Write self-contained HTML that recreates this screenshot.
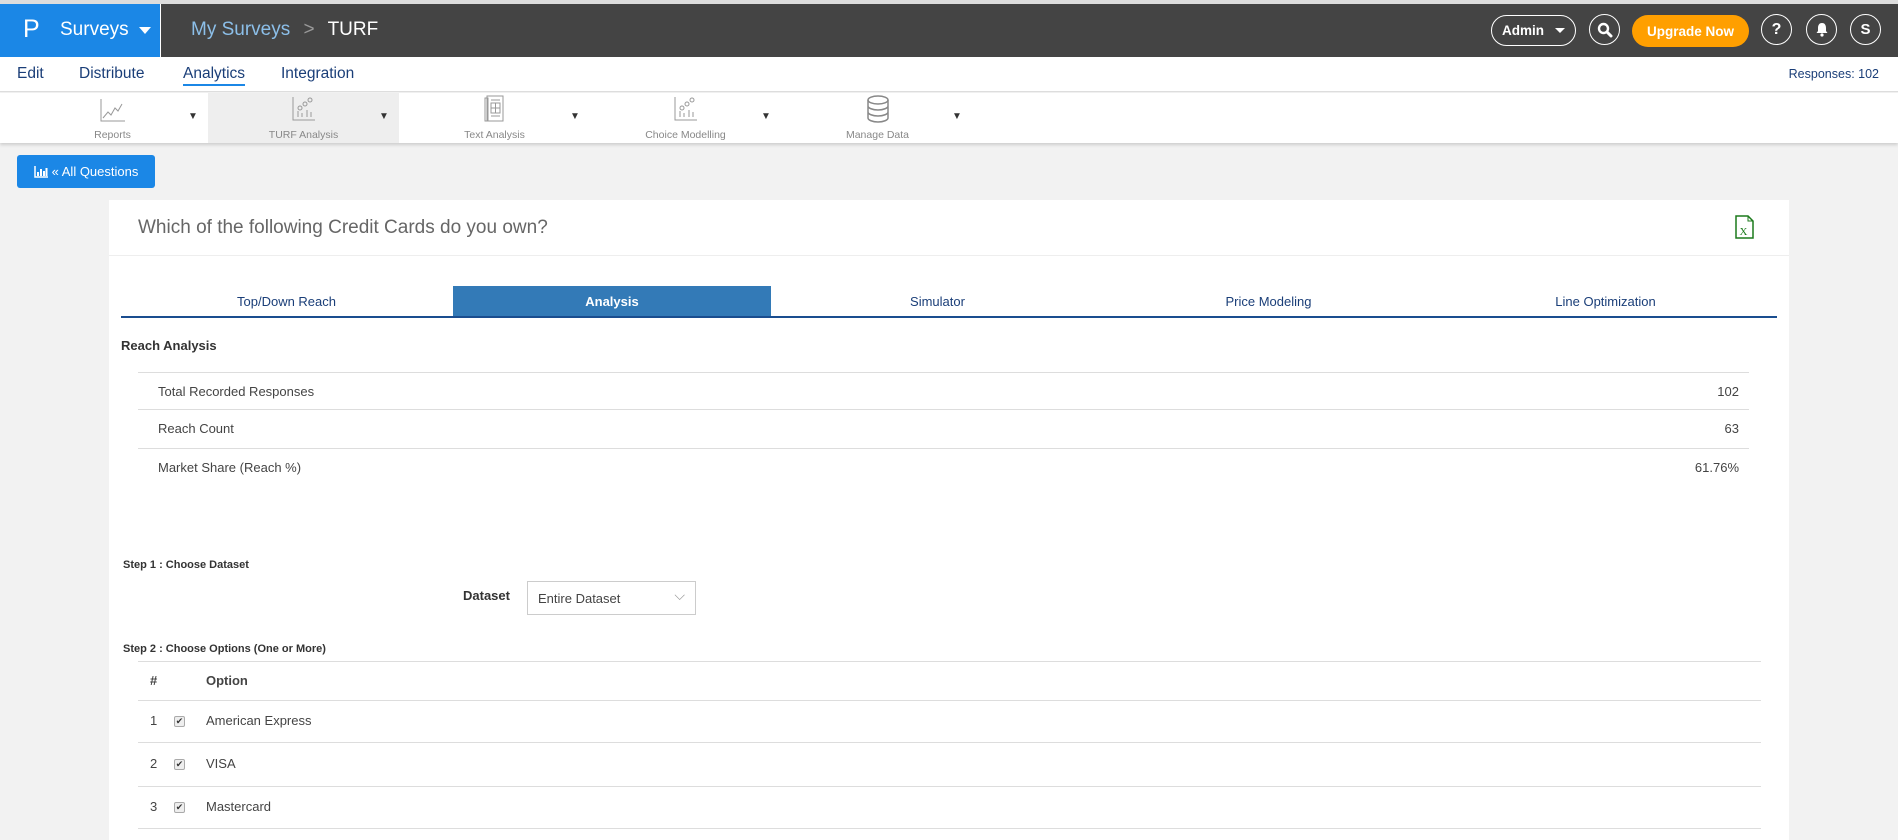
<!DOCTYPE html>
<html><head><meta charset="utf-8"><style>
*{box-sizing:border-box;margin:0;padding:0}
body{width:1898px;height:830px;overflow:hidden;background:#f2f2f2;font-family:"Liberation Sans",sans-serif;position:relative;color:#333}
.abs{position:absolute}
#strip{left:0;top:0;width:1898px;height:4px;background:#ddd}
#top{left:0;top:4px;width:1898px;height:53px;background:#444}
#logo{left:0;top:4px;width:161px;height:53px;background:#1b87e6;border-right:1px solid #fff}
.pill{border:1.5px solid #fff;border-radius:16px;color:#fff;font-size:13.5px;font-weight:bold;display:flex;align-items:center;justify-content:center}
.circ{width:31px;height:31px;border:1.5px solid #fff;border-radius:50%;color:#fff;font-weight:bold;font-size:16px;display:flex;align-items:center;justify-content:center;top:14px}
#nav{left:0;top:57px;width:1898px;height:35px;background:#fff;border-bottom:1px solid #ddd}
.nv{top:8px;font-size:15.5px;color:#1a3e78}
#tb{left:0;top:93px;width:1898px;height:50px;background:#fff;box-shadow:0 2px 3px rgba(0,0,0,.15)}
.tbl{font-size:10.5px;color:#888;top:36px;text-align:center;width:191px}
.arr{top:18px;font-size:10px;color:#333}
#btn{left:17px;top:155px;width:138px;height:33px;background:#1b87e6;border-radius:3px;color:#fff;font-size:13px;display:flex;align-items:center;justify-content:center}
#card{left:109px;top:200px;width:1680px;height:640px;background:#fff}
.tab{top:86px;height:30px;font-size:13px;color:#1a3e78;display:flex;align-items:center;justify-content:center}
.row{position:absolute;left:29px;width:1611px;border-top:1px solid #ddd;height:38px;font-size:13px;color:#444}
.row span{position:absolute;top:11px}
.orow{position:absolute;left:29px;width:1623px;border-top:1px solid #ddd;font-size:13px;color:#444}
.orow span{position:absolute}
.cb{width:11px;height:11px;border:1px solid #aaa;border-radius:2px;background:#eee;font-size:9px;line-height:9px;text-align:center;color:#333}
</style></head><body>
<div id="strip" class="abs"></div>
<div id="top" class="abs"></div>
<div id="logo" class="abs">
 <div class="abs" style="left:23px;top:11px;color:#fff;font-size:25px">P</div>
 <div class="abs" style="left:60px;top:15px;color:#fff;font-size:19px">Surveys</div>
 <div class="abs" style="left:139px;top:23px;width:0;height:0;border-left:6px solid transparent;border-right:6px solid transparent;border-top:7px solid #fff"></div>
</div>
<div class="abs" style="left:191px;top:19px;font-size:19px;color:#8cbfe9">My Surveys <span style="color:#999;margin:0 8px">&gt;</span> <span style="color:#fff">TURF</span></div>
<div class="abs pill" style="left:1491px;top:15px;width:85px;height:31px;justify-content:flex-start;padding-left:10px">Admin<span style="position:absolute;right:10px;top:12px;border-left:5px solid transparent;border-right:5px solid transparent;border-top:5px solid #fff"></span></div>
<div class="abs circ" style="left:1589px"><svg width="16" height="16" viewBox="0 0 16 16"><circle cx="6.5" cy="6.5" r="4.5" stroke="#fff" stroke-width="2.4" fill="none"/><path d="M10 10l4 4" stroke="#fff" stroke-width="3" stroke-linecap="round"/></svg></div>
<div class="abs" style="left:1632px;top:15px;width:117px;height:32px;background:#ff9f00;border-radius:16px;color:#fff;font-size:13.5px;font-weight:bold;display:flex;align-items:center;justify-content:center">Upgrade Now</div>
<div class="abs circ" style="left:1761px">?</div>
<div class="abs circ" style="left:1806px"><svg width="14" height="15" viewBox="0 0 14 15"><path d="M7 1C4 1 3 3.5 3 6v3L1.5 11h11L11 9V6c0-2.5-1-5-4-5z" fill="#fff"/><circle cx="7" cy="13" r="1.6" fill="#fff"/></svg></div>
<div class="abs circ" style="left:1850px;font-size:15px">S</div>
<div id="nav" class="abs">
 <div class="abs nv" style="left:17px">Edit</div>
 <div class="abs nv" style="left:79px">Distribute</div>
 <div class="abs nv" style="left:183px;border-bottom:2px solid #1b87e6;padding-bottom:1px">Analytics</div>
 <div class="abs nv" style="left:281px">Integration</div>
 <div class="abs" style="right:19px;top:10px;font-size:12.5px;color:#1a3e78">Responses: 102</div>
</div>
<div id="tb" class="abs">
 <div class="abs" style="left:208px;top:0;width:191px;height:50px;background:#eee"></div>
 <div class="abs tbl" style="left:17px">Reports</div>
 <div class="abs tbl" style="left:208px">TURF Analysis</div>
 <div class="abs tbl" style="left:399px">Text Analysis</div>
 <div class="abs tbl" style="left:590px">Choice Modelling</div>
 <div class="abs tbl" style="left:782px">Manage Data</div>
 <div class="abs arr" style="left:188px">▼</div><div class="abs arr" style="left:379px">▼</div><div class="abs arr" style="left:570px">▼</div><div class="abs arr" style="left:761px">▼</div><div class="abs arr" style="left:952px">▼</div>
 <svg class="abs" style="left:100px;top:5px" width="26" height="25" viewBox="0 0 26 25"><path d="M1 1v22h24" stroke="#999" fill="none"/><path d="M3 20l5-6 3 3 4-7 3 3 4-7" stroke="#999" fill="none"/></svg>
 <svg class="abs" style="left:292px;top:3px" width="24" height="26" viewBox="0 0 24 26"><path d="M1 1v23h22" stroke="#999" fill="none"/><path d="M6 21v-6M10 21v-4M15 21v-7M19 21v-5" stroke="#999"/><circle cx="8" cy="12" r="2" stroke="#999" fill="none"/><circle cx="13" cy="8" r="2" stroke="#999" fill="none"/><circle cx="18" cy="4" r="2" stroke="#999" fill="none"/></svg>
 <svg class="abs" style="left:484px;top:2px" width="22" height="28" viewBox="0 0 22 28"><rect x="3" y="1" width="16" height="25" stroke="#999" fill="none"/><rect x="1" y="3" width="3" height="23" stroke="#999" fill="none"/><rect x="7" y="8" width="9" height="10" stroke="#999" fill="none"/><path d="M7 13h9M11.5 8v10M7 21h9M7 5h9" stroke="#999"/></svg>
 <svg class="abs" style="left:674px;top:3px" width="24" height="26" viewBox="0 0 24 26"><path d="M1 1v23h22" stroke="#999" fill="none"/><path d="M6 21v-6M10 21v-4M15 21v-7M19 21v-5" stroke="#999"/><circle cx="8" cy="12" r="2" stroke="#999" fill="none"/><circle cx="13" cy="8" r="2" stroke="#999" fill="none"/><circle cx="18" cy="4" r="2" stroke="#999" fill="none"/></svg>
 <svg class="abs" style="left:866px;top:2px" width="24" height="28" viewBox="0 0 24 28"><ellipse cx="12" cy="5" rx="10" ry="4" stroke="#888" stroke-width="1.5" fill="none"/><path d="M2 5v18c0 2 4.5 4 10 4s10-2 10-4V5M2 11c0 2 4.5 4 10 4s10-2 10-4M2 17c0 2 4.5 4 10 4s10-2 10-4" stroke="#888" stroke-width="1.5" fill="none"/></svg>
</div>
<div id="btn" class="abs"><svg width="14" height="12" viewBox="0 0 14 12" style="margin-right:4px"><path d="M1 0v11h13" stroke="#fff" stroke-width="1.5" fill="none"/><path d="M4 10V6M7 10V3M10 10V5M12.5 10V2" stroke="#fff" stroke-width="2"/></svg>« All Questions</div>
<div id="card" class="abs">
 <div class="abs" style="left:29px;top:17px;font-size:19px;color:#666">Which of the following Credit Cards do you own?</div>
 <svg class="abs" style="left:1626px;top:15px" width="20" height="24" viewBox="0 0 20 24"><path d="M1 1h12l5 5v17H1z" stroke="#1c7a1c" stroke-width="1.5" fill="#fff"/><path d="M13 1v5h5" stroke="#1c7a1c" fill="none"/><text x="4.5" y="20" font-size="11" fill="#1c7a1c" font-family="Liberation Serif">X</text></svg>
 <div class="abs" style="left:0;top:55px;width:1680px;border-top:1px solid #eee"></div>
 <div class="abs tab" style="left:12px;width:331px">Top/Down Reach</div>
 <div class="abs tab" style="left:344px;width:318px;background:#337ab7;color:#fff;font-weight:bold">Analysis</div>
 <div class="abs tab" style="left:663px;width:331px">Simulator</div>
 <div class="abs tab" style="left:994px;width:331px">Price Modeling</div>
 <div class="abs tab" style="left:1325px;width:343px">Line Optimization</div>
 <div class="abs" style="left:12px;top:116px;width:1656px;border-top:2px solid #1a4d8f"></div>
 <div class="abs" style="left:12px;top:138px;font-size:13px;font-weight:bold;color:#333">Reach Analysis</div>
 <div class="row" style="top:172px"><span style="left:20px">Total Recorded Responses</span><span style="right:10px">102</span></div>
 <div class="row" style="top:209px"><span style="left:20px">Reach Count</span><span style="right:10px">63</span></div>
 <div class="row" style="top:248px;border-top:1px solid #ddd"><span style="left:20px">Market Share (Reach %)</span><span style="right:10px">61.76%</span></div>
 <div class="abs" style="left:14px;top:359px;font-size:11px;font-weight:bold">Step 1 : Choose Dataset</div>
 <div class="abs" style="left:354px;top:388px;font-size:13px;font-weight:bold">Dataset</div>
 <div class="abs" style="left:418px;top:381px;width:169px;height:34px;border:1px solid #ccc;font-size:13px;color:#444;padding:9px 10px">Entire Dataset<span style="position:absolute;right:10px;top:5px;color:#999;font-size:14px">⌵</span></div>
 <div class="abs" style="left:14px;top:443px;font-size:11px;font-weight:bold">Step 2 : Choose Options (One or More)</div>
 <div class="orow" style="top:461px;height:39px;font-weight:bold"><span style="left:12px;top:11px">#</span><span style="left:68px;top:11px">Option</span></div>
 <div class="orow" style="top:500px;height:42px"><span style="left:12px;top:12px">1</span><span class="cb" style="left:36px;top:15px">✔</span><span style="left:68px;top:12px">American Express</span></div>
 <div class="orow" style="top:542px;height:44px"><span style="left:12px;top:13px">2</span><span class="cb" style="left:36px;top:16px">✔</span><span style="left:68px;top:13px">VISA</span></div>
 <div class="orow" style="top:586px;height:42px"><span style="left:12px;top:12px">3</span><span class="cb" style="left:36px;top:15px">✔</span><span style="left:68px;top:12px">Mastercard</span></div>
 <div class="orow" style="top:628px;height:10px"></div>
</div>
</body></html>
